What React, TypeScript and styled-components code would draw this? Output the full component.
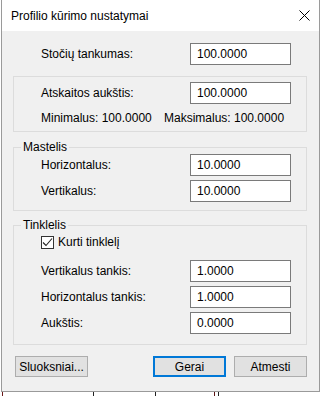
import React from "react";
import styled, { createGlobalStyle } from "styled-components";

const Global = createGlobalStyle`
  html, body {
    margin: 0;
    background: #ffffff;
  }
  body {
    font-family: "Liberation Sans", Arial, sans-serif;
    font-size: 12px;
    color: #000;
  }
  * { box-sizing: border-box; }
`;

const Window = styled.div`
  margin-left: 1px;
  width: 319px;
  height: 392px;
  border: 1px solid #9a9a9a;
  border-top: none;
  background: #f0f0f0;
  display: flex;
  flex-direction: column;
`;

// bits of the application window behind the dialog
const BehindStrip = styled.div`
  height: 4px;
  background:
    linear-gradient(#6b1a1a, #6b1a1a) 2px 0 / 1px 100% no-repeat,
    linear-gradient(#222, #222) 93px 0 / 1px 100% no-repeat,
    linear-gradient(#222, #222) 155px 0 / 1px 100% no-repeat,
    linear-gradient(#5a1414, #5a1414) 214px 0 / 1px 100% no-repeat,
    linear-gradient(#222, #222) 218px 0 / 1px 100% no-repeat;
`;

const TitleBar = styled.div`
  height: 31px;
  background: #ffffff;
  display: flex;
  align-items: center;
  justify-content: space-between;
  padding: 0 9px 0 9px;
  font-size: 12px;
`;

const Content = styled.div`
  padding: 11px 12px 0 11px;
  display: flex;
  flex-direction: column;
`;

const Group = styled.fieldset<{ $bare?: boolean; $mt?: number; $pt?: number; $pb?: number }>`
  margin: ${(p) => p.$mt ?? 0}px 0 0 0;
  padding: ${(p) => p.$pt ?? 0}px 0 ${(p) => p.$pb ?? 0}px 0;
  border: 1px solid ${(p) => (p.$bare ? "transparent" : "#dcdcdc")};
  min-width: 0;
  display: flex;
  flex-direction: column;
  gap: 4px;
`;

const Legend = styled.legend`
  margin-left: 7px;
  padding: 0 2px;
  line-height: 14px;
  font-size: 12px;
`;

const Row = styled.div<{ $mt?: number }>`
  display: grid;
  grid-template-columns: 149px 101px;
  align-items: center;
  padding: 0 15px 0 27px;
  margin-top: ${(p) => p.$mt ?? 0}px;
`;

const Label = styled.span`
  line-height: 15px;
`;

const Field = styled.div`
  height: 22px;
  border: 1px solid #7a7a7a;
  background: #ffffff;
  display: flex;
  align-items: center;
  padding-left: 6px;
`;

const Limits = styled.div`
  display: grid;
  grid-template-columns: 123px auto;
  padding-left: 27px;
  margin-top: 3px;
  line-height: 15px;
`;

const CheckRow = styled.label`
  display: flex;
  align-items: center;
  gap: 4px;
  padding-left: 27px;
  margin-top: 3px;
  line-height: 15px;
`;

const Box = styled.span`
  width: 13px;
  height: 13px;
  border: 1px solid #333333;
  background: #ffffff;
  display: flex;
  align-items: center;
  justify-content: center;
`;

const ButtonBar = styled.div`
  display: flex;
  margin-top: 11px;
  padding-left: 2px;
`;

const Button = styled.button<{ $primary?: boolean }>`
  width: 73px;
  height: 21px;
  font-family: "Liberation Sans", Arial, sans-serif;
  font-size: 12px;
  color: #000;
  background: #e1e1e1;
  border: 1px solid ${(p) => (p.$primary ? "#0078d7" : "#adadad")};
  box-shadow: ${(p) => (p.$primary ? "inset 0 0 0 1px #0078d7" : "none")};
  padding: 0;
  & + & { margin-left: 8px; }
`;

const Spacer = styled.div`
  margin-left: auto;
`;

const CloseIcon = () => (
  <svg width="11" height="11" viewBox="0 0 11 11">
    <path d="M0.5 0.5 L10.5 10.5 M10.5 0.5 L0.5 10.5" stroke="#000" strokeWidth="1" />
  </svg>
);

const CheckMark = () => (
  <svg width="11" height="11" viewBox="0 0 11 11">
    <path d="M1 5.5 L4 8.5 L10 1.5" stroke="#222" strokeWidth="1.1" fill="none" />
  </svg>
);

const Input = ({ value }: { value: string }) => <Field>{value}</Field>;

export default function App() {
  return (
    <>
      <Global />
      <Window>
        <TitleBar>
          <span>Profilio kūrimo nustatymai</span>
          <CloseIcon />
        </TitleBar>
        <Content>
          <Group $bare>
            <Row>
              <Label>Stočių tankumas:</Label>
              <Input value="100.0000" />
            </Row>
          </Group>
          <Group $mt={10} $pt={5} $pb={5}>
            <Row>
              <Label>Atskaitos aukštis:</Label>
              <Input value="100.0000" />
            </Row>
            <Limits>
              <span>Minimalus: 100.0000</span>
              <span>Maksimalus: 100.0000</span>
            </Limits>
          </Group>
          <Group $mt={8} $pb={8}>
            <Legend>Mastelis</Legend>
            <Row>
              <Label>Horizontalus:</Label>
              <Input value="10.0000" />
            </Row>
            <Row>
              <Label>Vertikalus:</Label>
              <Input value="10.0000" />
            </Row>
          </Group>
          <Group $mt={7} $pb={10}>
            <Legend>Tinklelis</Legend>
            <CheckRow>
              <Box>
                <CheckMark />
              </Box>
              Kurti tinklelį
            </CheckRow>
            <Row $mt={6}>
              <Label>Vertikalus tankis:</Label>
              <Input value="1.0000" />
            </Row>
            <Row>
              <Label>Horizontalus tankis:</Label>
              <Input value="1.0000" />
            </Row>
            <Row>
              <Label>Aukštis:</Label>
              <Input value="0.0000" />
            </Row>
          </Group>
          <ButtonBar>
            <Button>Sluoksniai...</Button>
            <Spacer />
            <Button $primary>Gerai</Button>
            <Button>Atmesti</Button>
          </ButtonBar>
        </Content>
      </Window>
      <BehindStrip />
    </>
  );
}
